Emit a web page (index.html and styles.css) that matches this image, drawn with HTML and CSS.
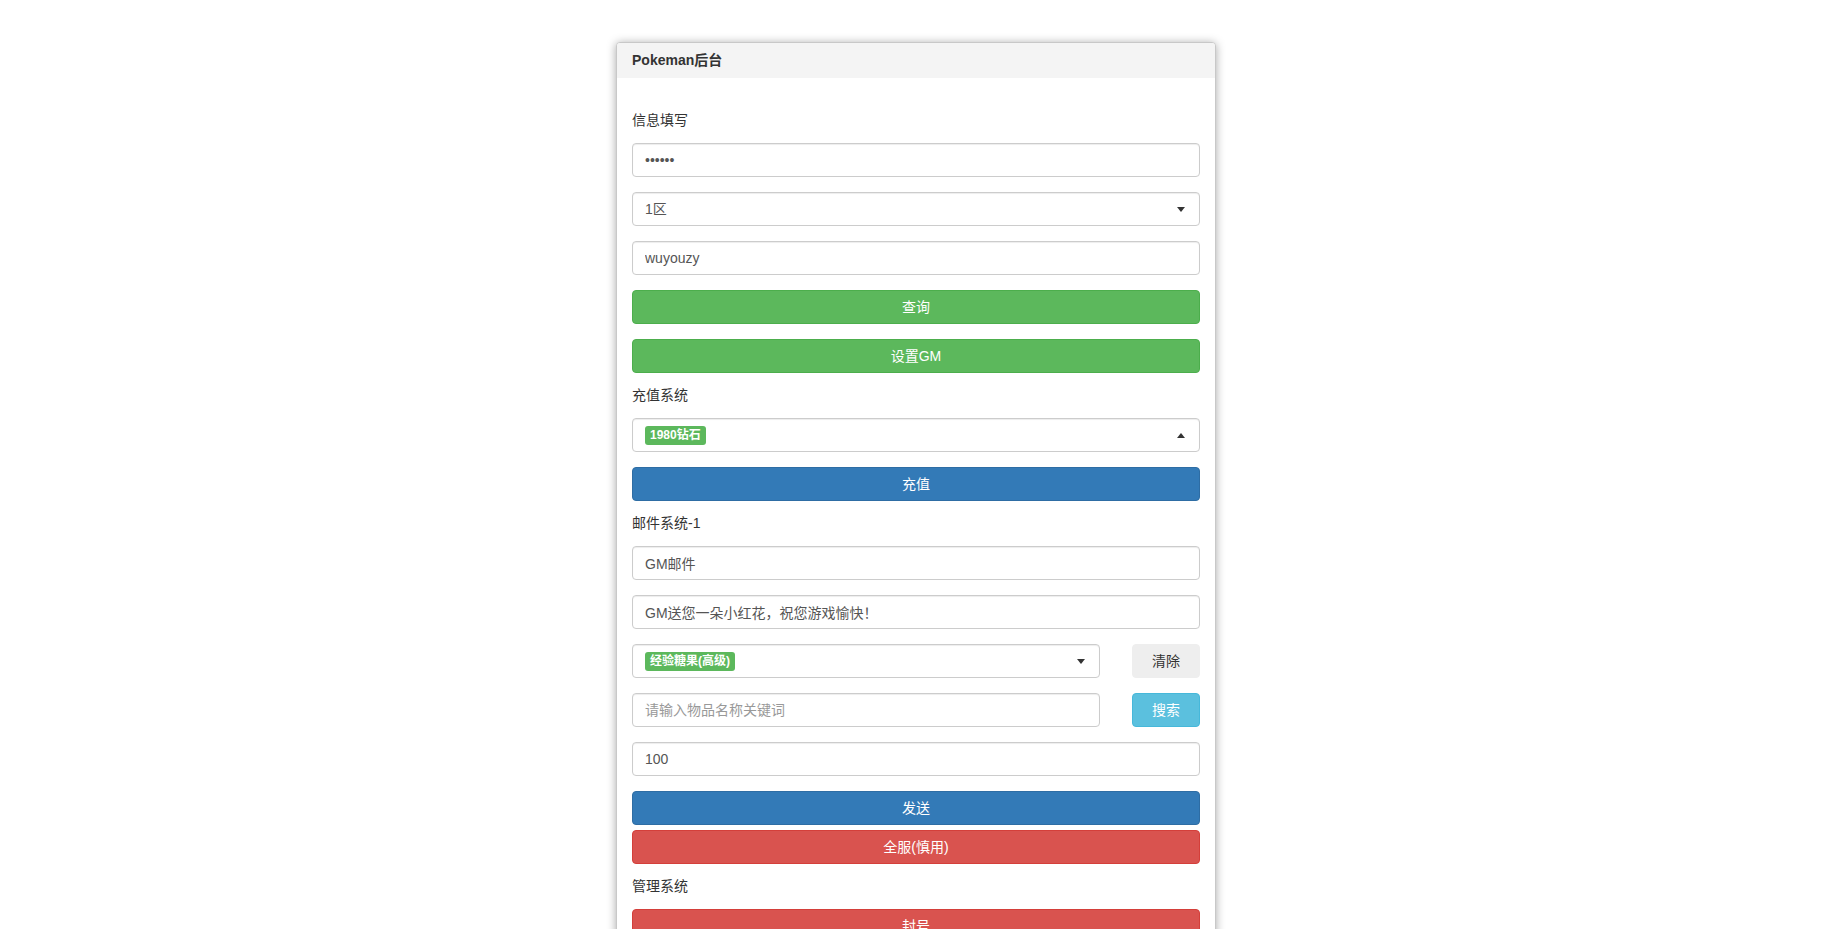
FILE: index.html
```html
<!DOCTYPE html>
<html lang="zh-CN">

<head>
    <meta charset="UTF-8">
    <meta name="viewport" content="width=device-width, initial-scale=1.0">
    <title>Pokeman后台</title>
    <link rel="stylesheet" href="styles.css">
</head>

<body>
    <div class="panel">
        <div class="panel-heading">Pokeman后台</div>
        <div class="panel-body">
            <!-- 信息填写 -->
            <label class="section-title">信息填写</label>
            <div class="form-group">
                <input type="password" class="form-control" value="123456">
            </div>
            <div class="form-group">
                <div class="select-box">
                    <span>1区</span>
                    <span class="caret"></span>
                </div>
            </div>
            <div class="form-group">
                <input type="text" class="form-control" value="wuyouzy">
            </div>
            <div class="form-group">
                <button class="btn btn-success">查询</button>
            </div>
            <div class="form-group">
                <button class="btn btn-success">设置GM</button>
            </div>

            <!-- 充值系统 -->
            <label class="section-title">充值系统</label>
            <div class="form-group">
                <div class="select-box">
                    <span class="tag">1980钻石</span>
                    <span class="caret caret-up"></span>
                </div>
            </div>
            <div class="form-group">
                <button class="btn btn-primary">充值</button>
            </div>

            <!-- 邮件系统 -->
            <label class="section-title">邮件系统-1</label>
            <div class="form-group">
                <input type="text" class="form-control" value="GM邮件">
            </div>
            <div class="form-group">
                <input type="text" class="form-control" value="GM送您一朵小红花，祝您游戏愉快！">
            </div>
            <div class="form-group form-row">
                <div class="select-box">
                    <span class="tag">经验糖果(高级)</span>
                    <span class="caret"></span>
                </div>
                <button class="btn btn-default btn-side">清除</button>
            </div>
            <div class="form-group form-row">
                <input type="text" class="form-control" placeholder="请输入物品名称关键词">
                <button class="btn btn-info btn-side">搜索</button>
            </div>
            <div class="form-group">
                <input type="text" class="form-control" value="100">
            </div>
            <div class="form-group tight">
                <button class="btn btn-primary">发送</button>
            </div>
            <div class="form-group">
                <button class="btn btn-danger">全服(慎用)</button>
            </div>

            <!-- 管理系统 -->
            <label class="section-title">管理系统</label>
            <div class="form-group">
                <button class="btn btn-danger">封号</button>
            </div>
            <div class="form-group">
                <button class="btn btn-success">解封</button>
            </div>
        </div>
    </div>
</body>

</html>
```

FILE: styles.css
```css
* {
    margin: 0;
    padding: 0;
    box-sizing: border-box;
}

body {
    background: #fff;
    font-family: 'Liberation Sans', 'Noto Sans CJK SC', sans-serif;
    font-size: 14px;
    line-height: 20px;
    color: #333;
    padding: 42px 12px 40px 0;
}

.panel {
    width: 600px;
    margin: 0 auto;
    background: #fff;
    border: 1px solid #c8c8c8;
    border-radius: 4px;
    box-shadow: 0 1px 10px rgba(0, 0, 0, 0.35);
}

.panel-heading {
    padding: 10px 15px;
    line-height: 15px;
    font-weight: bold;
    background: #f4f4f4;
    border-radius: 3px 3px 0 0;
}

.panel-body {
    padding: 35px 15px 15px;
}

.section-title {
    display: block;
    margin: -3px 0 13px;
    font-weight: normal;
}

.form-group {
    margin-bottom: 15px;
}

.form-group.tight {
    margin-bottom: 5px;
}

.form-row {
    display: grid;
    grid-template-columns: 468px 1fr;
    align-items: center;
}

.form-control {
    display: block;
    width: 100%;
    height: 34px;
    padding: 6px 12px;
    font: inherit;
    color: #555;
    background: #fff;
    border: 1px solid #ccc;
    border-radius: 4px;
    box-shadow: inset 0 1px 1px rgba(0, 0, 0, 0.075);
    outline: none;
}

.form-control::placeholder {
    color: #999;
}

.select-box {
    display: flex;
    align-items: center;
    justify-content: space-between;
    height: 34px;
    padding: 0 14px 0 12px;
    color: #555;
    border: 1px solid #ccc;
    border-radius: 4px;
    box-shadow: inset 0 1px 1px rgba(0, 0, 0, 0.075);
}

.caret {
    width: 0;
    height: 0;
    border-top: 5px solid #333;
    border-left: 4px solid transparent;
    border-right: 4px solid transparent;
}

.caret-up {
    border-top: none;
    border-bottom: 5px solid #333;
}

.tag {
    display: inline-block;
    padding: 3px 5px;
    font-size: 12px;
    line-height: 13px;
    font-weight: bold;
    color: #fff;
    background: #5cb85c;
    border-radius: 3px;
}

.btn {
    display: block;
    width: 100%;
    height: 34px;
    padding: 6px 12px;
    font: inherit;
    color: #fff;
    text-align: center;
    border: 1px solid transparent;
    border-radius: 4px;
    cursor: pointer;
}

.btn-side {
    width: 68px;
    justify-self: end;
}

.btn-default {
    color: #333;
    background: #eee;
    border-color: #eee;
}

.btn-success {
    background: #5cb85c;
    border-color: #4cae4c;
}

.btn-primary {
    background: #337ab7;
    border-color: #2e6da4;
}

.btn-info {
    background: #5bc0de;
    border-color: #46b8da;
}

.btn-danger {
    background: #d9534f;
    border-color: #d43f3a;
}
```
